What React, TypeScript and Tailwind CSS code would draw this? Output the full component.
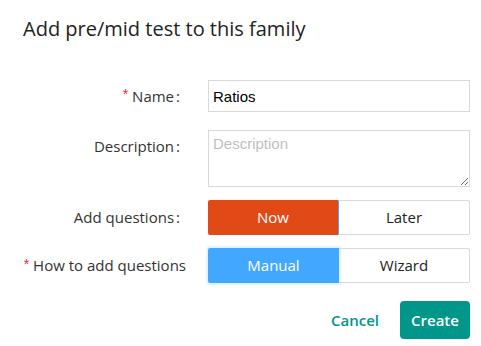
import React from 'react';

const font = { fontFamily: '"Open Sans", "Noto Sans", sans-serif' };

const Label: React.FC<{ text: string; required?: boolean; colon?: boolean }> = ({ text, required, colon = true }) => (
  <div className="w-[188px] shrink-0 flex justify-end items-center h-[32px] text-[15px] text-[#333]">
    {required && <span className="text-[#f5222d] mr-[4px] text-[14px] leading-none translate-y-[-2px]" style={{ fontFamily: 'SimSun, "Liberation Sans", sans-serif' }}>*</span>}
    <span>{text}</span>
    {colon ? <span className="ml-[2px] mr-[8px]">:</span> : <span className="mr-[2px]"></span>}
  </div>
);

const App: React.FC = () => {
  return (
    <div className="w-[481px] h-[346px] bg-white overflow-hidden" style={font}>
      <h1 className="pl-[23px] pt-[15px] text-[20px] leading-[28px] text-[#222] font-normal">
        Add pre/mid test to this family
      </h1>

      <div className="mt-[37px] flex flex-col">
        {/* name */}
        <div className="flex">
          <Label text="Name" required />
          <div className="ml-[20px] w-[262px]">
            <input
              defaultValue="Ratios"
              className="w-full h-[32px] border border-[#d9d9d9] px-[4px] text-[15px] text-black outline-none"
              style={{ fontFamily: '"Liberation Sans", Arial, sans-serif' }}
            />
          </div>
        </div>

        {/* description */}
        <div className="flex mt-[18px]">
          <Label text="Description" />
          <div className="ml-[20px] w-[262px]">
            <textarea
              placeholder="Description"
              className="block w-full h-[57px] border border-[#d9d9d9] px-[4px] py-[4px] text-[15px] leading-[18px] placeholder:text-[#bfbfbf] outline-none"
              style={{ fontFamily: '"Liberation Sans", Arial, sans-serif' }}
            />
          </div>
        </div>

        {/* add questions */}
        <div className="flex mt-[13px]">
          <div className="flex items-center h-[35px]">
            <Label text="Add questions" />
          </div>
          <div className="ml-[20px] w-[262px] flex h-[35px] text-[15px]">
            <div className="w-[130px] bg-[#e14a17] text-white rounded-l-[2px] flex items-center justify-center">Now</div>
            <div className="flex-1 border border-[#d9d9d9] border-l-[#40a9ff] rounded-r-[2px] flex items-center justify-center text-[#222]">Later</div>
          </div>
        </div>

        {/* how to add */}
        <div className="flex mt-[13px]">
          <div className="flex items-center h-[35px]">
            <Label text="How to add questions" required colon={false} />
          </div>
          <div className="ml-[20px] w-[262px] flex h-[35px] text-[15px]">
            <div className="w-[131px] bg-[#42a8ff] text-white rounded-l-[2px] flex items-center justify-center shadow-[0_0_0_2px_#e3f4ff]">Manual</div>
            <div className="flex-1 border border-[#d9d9d9] border-l-0 rounded-r-[2px] flex items-center justify-center text-[#222]">Wizard</div>
          </div>
        </div>

        {/* actions */}
        <div className="flex justify-end items-center mt-[18px] pr-[11px] gap-[21px] text-[15px]">
          <button className="text-[#00968a] font-semibold">Cancel</button>
          <button className="w-[70px] h-[38px] bg-[#00968a] text-white rounded-[4px] font-semibold">Create</button>
        </div>
      </div>
    </div>
  );
};

export default App;
